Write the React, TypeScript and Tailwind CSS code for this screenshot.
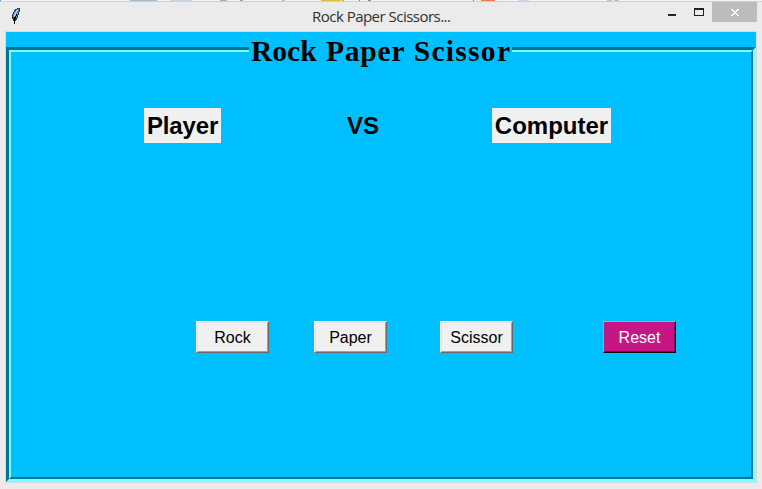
import React from "react";

function Choice({ label, reset = false }: { label: string; reset?: boolean }) {
  const outer = reset
    ? "border-t-[#ee82c4] border-l-[#ee82c4] border-b-black border-r-black bg-[#c71585] text-white"
    : "border-t-white border-l-white border-b-[#696969] border-r-[#696969] bg-[#f0f0f0] text-black";
  const inner = reset
    ? "border-t-[#c71585] border-l-[#c71585] border-b-[#770c50] border-r-[#770c50]"
    : "border-t-[#e3e3e3] border-l-[#e3e3e3] border-b-[#a0a0a0] border-r-[#a0a0a0]";
  return (
    <button className={`h-8 w-[73px] border ${outer}`}>
      <span className={`flex h-full w-full items-center justify-center border pt-px text-[16px] leading-none ${inner}`}>
        {label}
      </span>
    </button>
  );
}

const sliver: [number, number, string][] = [
  [0, 1, "#5b8bc8"], [130, 27, "#a9b8d3"], [170, 22, "#c9d5e8"], [220, 7, "#9fb1cb"], [240, 3, "#8b9dbb"],
  [282, 3, "#a9b8d3"], [321, 20, "#e2bd42"], [342, 2, "#d4a529"], [359, 1, "#777777"], [368, 3, "#888888"],
  [473, 1, "#777777"], [481, 14, "#f27a43"], [518, 11, "#c6d9ed"], [607, 5, "#bdbdbd"], [614, 5, "#bdbdbd"],
];

export default function App() {
  return (
    <div className="flex h-[489px] w-[762px] flex-col overflow-hidden bg-[#ebebeb] font-['Liberation_Sans',Arial,sans-serif]">
      <svg className="block h-[2px] w-full shrink-0" viewBox="0 0 762 2" shapeRendering="crispEdges">
        <rect width="762" height="1" fill="#f5f5f5" />
        {sliver.map(([x, w, c]) => <rect key={x} x={x} width={w} height="1" fill={c} />)}
        <rect y="1" width="762" height="1" fill="#cdcfd0" />
      </svg>
      <header className="flex h-[29px] shrink-0 items-start pr-[5px]">
        <svg className="mt-[6px] ml-[11px] h-4 w-[10px]" viewBox="0 0 10 16" shapeRendering="crispEdges">
          <path d="M6 0h3v4h-1v3h-1v3h-1v2H5v1H2v-2H1V6h1V4h1V2h1V1h2z" fill="#33363d" />
          <path d="M6 1h2v3H7v3H6v3H5v1H3V9H2V6h1V4h1V3h1V2h1z" fill="#4d8dde" />
          <path d="M5 2h2v1H6v2H5v2H4v2H3V6h1V4h1z" fill="#a9d4fa" />
          <path d="M5 6h1v2H5v3H4v5H3V9h1V8h1z" fill="#050505" />
        </svg>
        <h1 className="mt-[4px] ml-[291px] w-[150px] whitespace-nowrap font-['Open_Sans',sans-serif] text-[15px] leading-5 tracking-[-0.52px] text-[#303030]">
          Rock Paper Scissors...
        </h1>
        <div className="ml-auto flex">
          <svg className="h-5 w-[50px]" viewBox="0 0 50 20" shapeRendering="crispEdges">
            <path d="M6 12h8v2H6z" fill="#222" />
            <path d="M32 6h10v8H32z M33 8v5h8V8z" fillRule="evenodd" fill="#222" />
          </svg>
          <div className="flex h-5 w-[45px] items-center justify-center bg-[#bcbcbc]">
            <svg width="8" height="7" viewBox="0 0 8 7" shapeRendering="crispEdges">
              <path d="M0 0h2v1h1v1h2V1h1V0h2v1H7v1H6v1H5v1h1v1h1v1h1v1H6V6H5V5H3v1H2v1H0V6h1V5h1V4h1V3H2V2H1V1H0z" fill="white" />
            </svg>
          </div>
        </div>
      </header>
      <main className="ml-[5px] flex h-[452px] w-[752px] shrink-0 flex-col border border-[#d9d9d9] bg-[#00bfff]">
        <section className="mt-[15px] h-[435px] border-[3px] border-t-[#007399] border-l-[#007399] border-r-[#80ffff] border-b-[#80ffff]">
          <div className="flex h-full flex-col border-2 border-t-[#80ffff] border-l-[#80ffff] border-r-[#007399] border-b-[#007399]">
            <div className="mt-[-17px] ml-[238px] h-[32px] w-[263px] bg-[#00bfff]">
              <h2 className="ml-[2px] whitespace-nowrap font-['Liberation_Serif',serif] text-[29.5px] leading-8 font-bold text-black">
                <span>Rock</span>{" "}
                <span className="ml-[2px] tracking-[0.8px]">Paper</span>{" "}
                <span className="ml-px tracking-[1.3px]">Scissor</span>
              </h2>
            </div>
            <div className="mt-[41px] ml-[133px] flex h-[35px] items-center text-[24px] leading-none font-bold text-black">
              <div className="flex h-[35px] w-[77px] items-center justify-center bg-[#f0f0f0] tracking-[-0.15px]">Player</div>
              <div className="ml-[126px] w-[34px]">VS</div>
              <div className="ml-[111px] flex h-[35px] w-[119px] items-center justify-center bg-[#f0f0f0]">Computer</div>
            </div>
            <div className="mt-[178px] ml-[185px] flex">
              <Choice label="Rock" />
              <div className="ml-[45px] flex"><Choice label="Paper" /></div>
              <div className="ml-[53px] flex"><Choice label="Scissor" /></div>
              <div className="ml-[90px] flex"><Choice label="Reset" reset /></div>
            </div>
          </div>
        </section>
      </main>
    </div>
  );
}
